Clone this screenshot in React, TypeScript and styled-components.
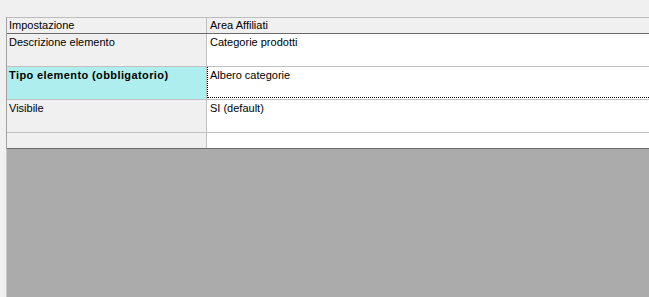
import React from 'react';
import styled, { createGlobalStyle } from 'styled-components';

const GlobalStyle = createGlobalStyle`
  html, body {
    margin: 0;
    padding: 0;
    height: 100%;
    background: #f0f0f0;
  }
  #root {
    height: 100%;
  }
  * {
    box-sizing: border-box;
  }
`;

const Page = styled.div`
  height: 297px;
  padding: 17px 0 0 6px;
  display: flex;
  flex-direction: column;
  font-family: 'Liberation Sans', Arial, sans-serif;
  font-size: 11px;
  line-height: 13px;
  color: #000;
`;

const Grid = styled.div`
  flex: 1;
  display: flex;
  flex-direction: column;
  border-left: 1px solid #a0a0a0;
  border-top: 1px solid #bdbdbd;
`;

// height includes the bottom grid line
const Row = styled.div<{ $height: number; $last?: boolean }>`
  display: grid;
  grid-template-columns: 200px 1fr;
  height: ${(p) => p.$height}px;
  flex-shrink: 0;
  border-bottom: 1px solid ${(p) => (p.$last ? '#6a6a6a' : '#c0c0c0')};
`;

const HeaderRow = styled(Row)`
  border-bottom: 1px solid #6a6a6a;
`;

const NameCell = styled.div<{ $focused?: boolean; $header?: boolean }>`
  background: ${(p) => (p.$focused ? '#afeeee' : '#f0f0f0')};
  border-right: 1px solid #c0c0c0;
  padding: ${(p) => (p.$header ? '1px 2px' : '2px 2px')};
  font-weight: ${(p) => (p.$focused ? 'bold' : 'normal')};
  letter-spacing: ${(p) => (p.$focused ? '0.4px' : '0')};
  white-space: nowrap;
  overflow: hidden;
`;

const ValueCell = styled.div<{ $header?: boolean; $focused?: boolean }>`
  position: relative;
  background: ${(p) => (p.$header ? '#f0f0f0' : '#ffffff')};
  padding: ${(p) => (p.$header ? '1px 3px' : '2px 3px')};
  white-space: nowrap;
  overflow: hidden;

  ${(p) =>
    p.$focused &&
    `
    &::after {
      content: '';
      position: absolute;
      left: 0;
      right: -4px;
      top: -1px;
      bottom: 1px;
      border: 1px dotted #000;
    }
  `}
`;

const Empty = styled.div`
  flex: 1;
  background: #ababab;
  border-left: 1px solid #c8c8c8;
  margin-left: -1px;
`;

type Item = { name: string; value: string; focused?: boolean };

const items: Item[] = [
  { name: 'Descrizione elemento', value: 'Categorie prodotti' },
  { name: 'Tipo elemento (obbligatorio)', value: 'Albero categorie', focused: true },
  { name: 'Visibile', value: 'SI (default)' },
];

export default function App() {
  return (
    <>
      <GlobalStyle />
      <Page>
        <Grid>
          <HeaderRow $height={16}>
            <NameCell $header>Impostazione</NameCell>
            <ValueCell $header>Area Affiliati</ValueCell>
          </HeaderRow>
          {items.map((item) => (
            <Row key={item.name} $height={33}>
              <NameCell $focused={item.focused}>{item.name}</NameCell>
              <ValueCell $focused={item.focused}>{item.value}</ValueCell>
            </Row>
          ))}
          <Row $height={16} $last>
            <NameCell />
            <ValueCell />
          </Row>
          <Empty />
        </Grid>
      </Page>
    </>
  );
}
